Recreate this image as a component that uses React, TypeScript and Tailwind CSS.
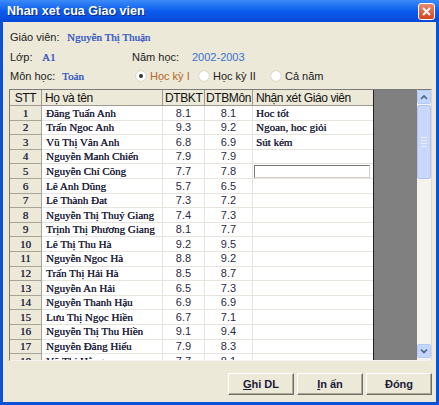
import React from 'react';

const rows: [number, string, string, string, string][] = [
  [1, 'Đăng Tuấn Anh', '8.1', '8.1', 'Hoc tốt'],
  [2, 'Trấn Ngoc Anh', '9.3', '9.2', 'Ngoan, hoc giỏi'],
  [3, 'Vũ Thị Vân Anh', '6.8', '6.9', 'Sút kém'],
  [4, 'Nguyễn Manh Chiến', '7.9', '7.9', ''],
  [5, 'Nguyễn Chí Công', '7.7', '7.8', ''],
  [6, 'Lê Anh Dũng', '5.7', '6.5', ''],
  [7, 'Lê Thành Đat', '7.3', '7.2', ''],
  [8, 'Nguyễn Thị Thuý Giang', '7.4', '7.3', ''],
  [9, 'Trịnh Thị Phương Giang', '8.1', '7.7', ''],
  [10, 'Lê Thị Thu Hà', '9.2', '9.5', ''],
  [11, 'Nguyễn Ngoc Hà', '8.8', '9.2', ''],
  [12, 'Trấn Thị Hải Hà', '8.5', '8.7', ''],
  [13, 'Nguyễn An Hải', '6.5', '7.3', ''],
  [14, 'Nguyễn Thanh Hậu', '6.9', '6.9', ''],
  [15, 'Lưu Thị Ngọc Hiền', '6.7', '7.1', ''],
  [16, 'Nguyễn Thị Thu Hiền', '9.1', '9.4', ''],
  [17, 'Nguyễn Đăng Hiếu', '7.9', '8.3', ''],
  [18, 'Vũ Thị Hằng', '7.7', '8.1', ''],
];

const sans = "font-['Liberation_Sans',Arial,sans-serif]";
const serif = "font-['Liberation_Serif','Times_New_Roman',serif]";
// old VNI fonts render heavy; fake a little weight without widening
const heavy = '[text-shadow:0.3px_0_0_currentColor]';

const Radio = ({ checked }: { checked?: boolean }) => (
  <svg width="12" height="12" viewBox="0 0 12 12" className="shrink-0">
    <circle cx="6" cy="6" r="5.3" fill="#fff" stroke="#d2d0c6" strokeWidth="0.8" />
    {checked && <circle cx="6" cy="6" r="2" fill="#333" />}
  </svg>
);

const Arrow = ({ up }: { up?: boolean }) => (
  <svg width="8" height="6" viewBox="0 0 8 6">
    <path
      d={up ? 'M1 5 L4 2 L7 5' : 'M1 1.5 L4 4.5 L7 1.5'}
      fill="none"
      stroke="#4d6185"
      strokeWidth="1.6"
    />
  </svg>
);

const Button = ({ children }: { children: React.ReactNode }) => (
  <button className="w-[66px] h-[22px] bg-[#ECE9D8] border border-t-white border-l-white border-r-[#716F64] border-b-[#716F64] shadow-[inset_-1px_-1px_0_#ACA899] flex items-center justify-center">
    <span className={`${sans} text-[11px] font-bold text-[#1b1b3a]`}>{children}</span>
  </button>
);

export default function App() {
  return (
    <div className="w-[439px] h-[405px] flex flex-col bg-[#0A50D8] overflow-hidden">
      {/* Title bar */}
      <div className="h-[22px] shrink-0 flex items-center justify-between pl-[7px] pr-[4px] bg-gradient-to-b from-[#3B8BF7] via-[#0A5CEE] to-[#0748D6]">
        <span className={`${sans} text-[12.5px] font-bold text-white [text-shadow:1px_1px_0_#0a2a8a]`}>
          Nhan xet cua Giao vien
        </span>
        <div className="w-[17px] h-[17px] rounded-[3px] border border-white bg-gradient-to-b from-[#E98A6C] to-[#D2421C] flex items-center justify-center">
          <svg width="9" height="9" viewBox="0 0 9 9">
            <path d="M1 1 L8 8 M8 1 L1 8" stroke="#fff" strokeWidth="1.8" />
          </svg>
        </div>
      </div>

      {/* Body */}
      <div className="flex-1 mx-[3px] mb-[3px] bg-[#ECE9D8] flex flex-col pt-[7px]">
        <div className={`${sans} text-[11px] text-[#222] pl-[7px] flex flex-col`}>
          <div className="h-[16px] flex items-center">
            <span className="w-[57px]">Giáo viên:</span>
            <span className={`${serif} ${heavy} text-[11px] text-[#3a5bc4]`}>Nguyễn Thị Thuận</span>
          </div>
          <div className="h-[16px] mt-[4px] flex items-center">
            <span className="w-[32px]">Lớp:</span>
            <span className={`${serif} ${heavy} text-[11px] text-[#3a5bc4] w-[90px]`}>A1</span>
            <span className="w-[60px]">Năm học:</span>
            <span className="text-[#3a6fd0]">2002-2003</span>
          </div>
          <div className="h-[16px] mt-[3px] flex items-center">
            <span className="w-[52px]">Môn học:</span>
            <span className={`${serif} ${heavy} text-[11px] text-[#3a5bc4] w-[73px]`}>Toán</span>
            <span className="w-[63px] flex items-center gap-[3px]">
              <Radio checked />
              <span className="text-[#b5651d]">Học kỳ I</span>
            </span>
            <span className="w-[72px] flex items-center gap-[3px]">
              <Radio />
              <span>Học kỳ II</span>
            </span>
            <span className="flex items-center gap-[3px]">
              <Radio />
              <span>Cả năm</span>
            </span>
          </div>
        </div>

        {/* Grid */}
        <div className="ml-[6px] mt-[5px] w-[423px] h-[272px] border border-[#7a7a7a] border-r-[#dcdad0] border-b-[#f4f3ee] flex overflow-hidden bg-white">
          <div className="w-[364px] flex flex-col overflow-hidden border-r border-[#222]">
            <div className={`${sans} text-[12px] tracking-[-0.4px] text-[#111] h-[16px] shrink-0 flex bg-[#ECE9D8] border-b border-[#9d9b90]`}>
              <div className="w-[32px] border-r border-[#9d9b90] flex items-center justify-center">STT</div>
              <div className="w-[121px] border-r border-[#9d9b90] flex items-center pl-[3px]">Họ và tên</div>
              <div className="w-[42px] border-r border-[#9d9b90] flex items-center pl-[2px]">DTBKT</div>
              <div className="w-[48px] border-r border-[#9d9b90] flex items-center pl-[1px] whitespace-nowrap overflow-hidden">DTBMôn</div>
              <div className="flex-1 flex items-center pl-[3px] whitespace-nowrap">Nhận xét Giáo viên</div>
            </div>
            {rows.map(([n, name, kt, mon, nx]) => (
              <div key={n} className="h-[14.6px] shrink-0 flex">
                <div className={`${serif} ${heavy} w-[32px] text-[11px] text-[#2a2a44] bg-[#ECE9D8] border-r border-b border-[#a7a59a] flex items-center justify-center`}>
                  {n}
                </div>
                <div className={`${serif} ${heavy} w-[121px] text-[11px] text-[#22223a] border-r border-b border-[#e6e4dc] flex items-center pl-[4px] whitespace-nowrap`}>
                  {name}
                </div>
                <div className={`${sans} w-[42px] text-[11px] text-[#2a2a44] border-r border-b border-[#e6e4dc] flex items-center justify-center`}>
                  {kt}
                </div>
                <div className={`${sans} w-[48px] text-[11px] text-[#2a2a44] border-r border-b border-[#e6e4dc] flex items-center justify-center`}>
                  {mon}
                </div>
                <div className={`${serif} ${heavy} flex-1 text-[11px] text-[#22223a] border-b border-[#e6e4dc] flex items-center pl-[3px] whitespace-nowrap`}>
                  {n === 5 ? (
                    <div className="w-[116px] h-[13px] -ml-[2px] border border-[#7a7a7a] border-r-[#d4d0c8] border-b-[#d4d0c8] bg-white" />
                  ) : (
                    nx
                  )}
                </div>
              </div>
            ))}
          </div>
          <div className="flex-1 bg-[#808080]" />
          {/* Scrollbar */}
          <div className="w-[14px] bg-[#F4F3EE] flex flex-col">
            <div className="h-[14px] bg-[#C5D6FC] border border-[#B4C8F6] rounded-[2px] flex items-center justify-center">
              <Arrow up />
            </div>
            <div className="h-[74px] mt-[1px] bg-[#C8D7FB] border border-[#B1C5F4] rounded-[2px] flex flex-col items-center justify-center gap-[2px]">
              <div className="w-[6px] h-px bg-[#eef3ff]" />
              <div className="w-[6px] h-px bg-[#eef3ff]" />
              <div className="w-[6px] h-px bg-[#eef3ff]" />
              <div className="w-[6px] h-px bg-[#eef3ff]" />
            </div>
            <div className="flex-1" />
            <div className="h-[14px] mb-[2px] bg-[#C5D6FC] border border-[#B4C8F6] rounded-[2px] flex items-center justify-center">
              <Arrow />
            </div>
          </div>
        </div>

        {/* Buttons */}
        <div className="mt-[12px] flex justify-end gap-[3px] pr-[4px]">
          <Button>
            <span className="underline">G</span>hi DL
          </Button>
          <Button>
            <span className="underline">I</span>n ấn
          </Button>
          <Button>
            Đón<span className="underline">g</span>
          </Button>
        </div>
      </div>
    </div>
  );
}
